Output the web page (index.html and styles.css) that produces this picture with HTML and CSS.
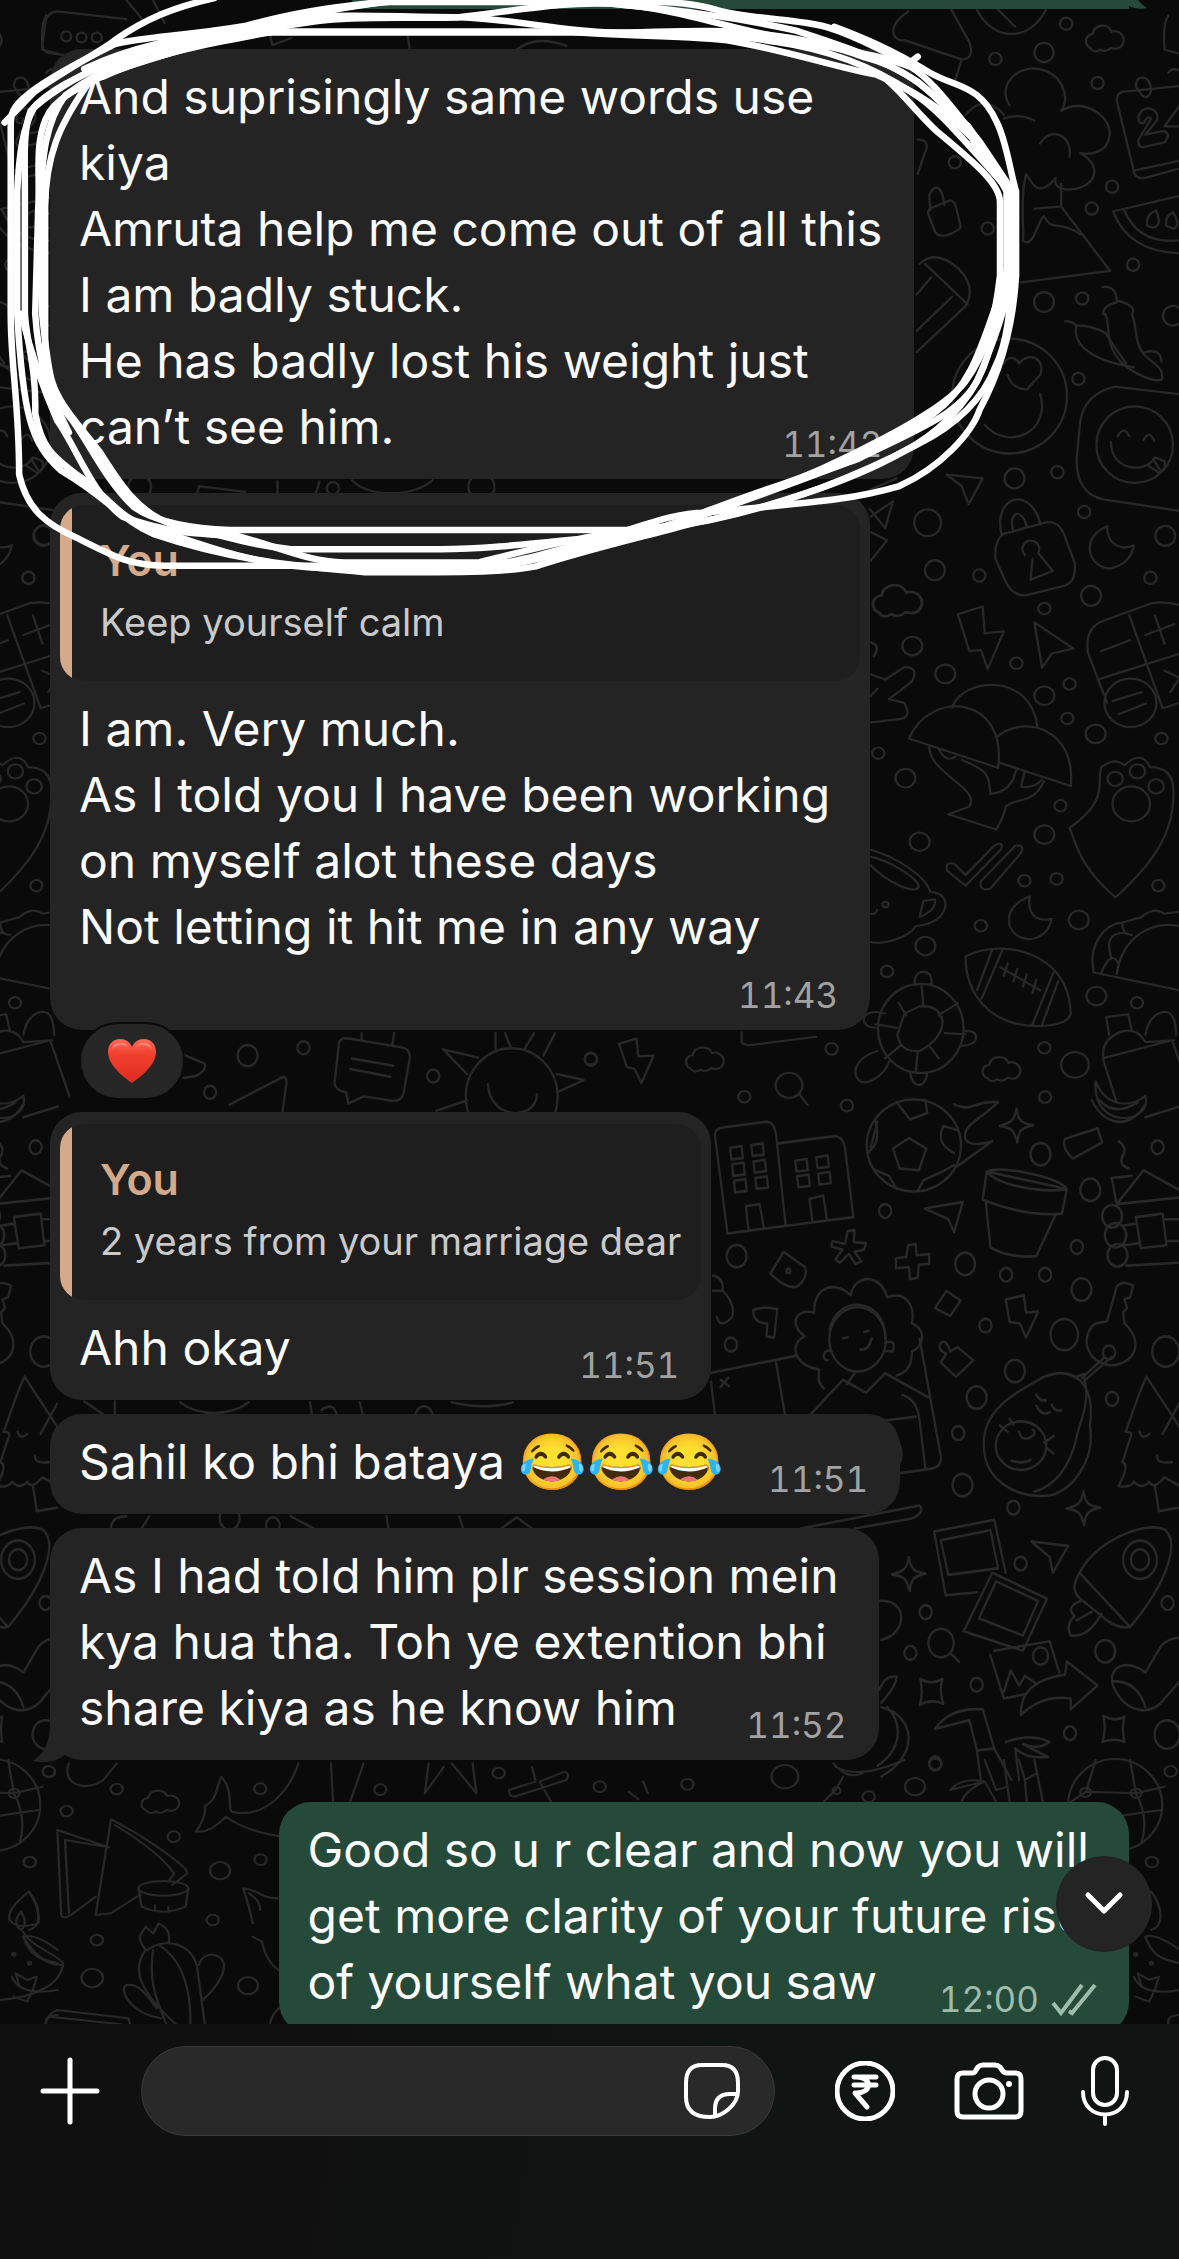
FILE: index.html
```html
<!DOCTYPE html>
<html lang="en">
<head>
<meta charset="utf-8">
<meta name="viewport" content="width=device-width, initial-scale=1">
<title>Chat</title>
<link rel="stylesheet" href="styles.css">
</head>
<body>
<main class="chat">
  <svg class="wallpaper" width="1179" height="2259" viewBox="0 0 1179 2259" aria-hidden="true">
    <defs>
      <path id="cloud" d="M-42 22C-62 12-58-14-38-16C-34-42 2-46 12-22C34-30 50-6 40 12C32 26 20 22 10 20C0 30-12 30-18 24C-28 32-38 30-42 22Z"/>
      <path id="spark" d="M0-38C6-10 12-4 44 0C12 6 6 12 2 40C-6 12-12 6-44 2C-12-6-6-10 0-38Z"/>
      <path id="dart" d="M-48-30L48-20L8 42L0 6Z"/>
      <g id="tile">
        <g transform="scale(.3827)">
          <path d="M860 30C800 70 820 110 850 105L1000 155Q1035 155 1020 110L970 20M1000 155L980 220M1040 25C1080 110 1180 110 1220 25M1080 10L1140 70M1540 40Q1525 60 1530 130L1570 140"/>
          <use href="#cloud" x="1380" y="105"/>
          <path d="M1125 275C1090 220 1150 170 1200 180C1260 190 1285 250 1260 290C1320 250 1400 310 1385 360C1380 400 1330 405 1310 400C1380 440 1340 500 1270 495Q1240 490 1245 465Q1210 510 1185 480M1110 310Q1150 295 1190 315M1205 375C1230 330 1290 350 1282 410M1010 300Q1060 240 1110 300M1185 480L1168 455C1150 530 1165 600 1160 630C1190 650 1200 570 1215 565C1240 610 1245 570 1310 612M1260 480V540L1388 708L1155 738M1190 545L1258 540"/>
          <path d="M1570 225L1420 240Q1400 245 1408 275L1448 440Q1450 470 1480 465L1570 440M1453 445L1570 420M1455 225q0-25 22-22q15 3 18 35q-10 25-25 10ZM1540 190q10-15 30-5"/>
          <path d="M1462 305C1470 270 1520 280 1510 315L1480 352L1528 342Q1548 350 1530 372L1470 385Q1455 375 1465 360L1495 310Q1485 300 1475 322Q1460 325 1462 305ZM1570 275L1530 330L1570 330"/>
          <path d="M918 550L915 510Q935 470 950 510L955 535M915 565Q905 545 930 540L965 525Q980 520 985 540L997 590Q998 603 960 615Q935 618 930 605ZM885 365q30 0 22 25L885 455M905 690L1015 795M882 770L920 725M882 865L975 775M882 920L1010 800Q1040 750 990 700Q930 650 890 690"/>
          <path d="M1396 552L1570 512M1396 552C1420 620 1480 660 1570 662M1425 550C1450 610 1500 635 1570 628M1485 590Q1480 560 1508 550Q1525 590 1500 595ZM1535 590Q1530 565 1552 555Q1575 590 1552 598Z"/>
          <path d="M1368 750C1400 745 1405 770 1405 790C1360 800 1368 830 1375 820C1390 850 1370 900 1420 950C1450 975 1500 1000 1523 992C1530 960 1500 950 1480 930C1450 900 1460 860 1445 820Q1460 800 1405 785M1270 840C1300 838 1300 860 1300 850C1290 890 1320 940 1450 960M1300 850Q1340 850 1375 870L1430 950M1480 920Q1520 910 1522 945"/>
          <circle cx="1125" cy="1035" r="150"/><path d="M1110 950C1120 930 1140 930 1150 950C1170 920 1220 930 1205 980L1170 1018Q1130 1015 1120 980M1205 1030C1235 1130 1120 1180 1060 1110"/>
          <circle cx="1452" cy="1162" r="100"/><path d="M1570 1030L1400 1010Q1320 1030 1310 1100L1300 1200Q1300 1290 1370 1305L1570 1335M1408 1140q15-30 30 0M1475 1150q15-30 28 2M1390 1155C1390 1230 1480 1240 1505 1195L1530 1205Q1535 1230 1515 1235L1485 1215M1500 1200L1520 1230M960 1240L1055 1250L1018 1318L1000 1270Z"/>
          <path d="M1105 1400C1090 1340 1115 1305 1150 1305C1180 1310 1200 1340 1205 1370M1135 1390C1120 1330 1160 1330 1170 1375M1110 1395L1220 1365Q1250 1360 1265 1390L1295 1470Q1300 1520 1270 1530L1170 1555Q1135 1560 1115 1520L1088 1460Q1085 1410 1110 1395ZM1165 1450a22 22 0 1 1 35-5L1238 1492L1180 1515L1185 1460M1380 1375C1300 1410 1340 1490 1390 1485Q1440 1475 1450 1425C1410 1440 1380 1420 1380 1375Z"/>
          <path d="M762 1390L805 1412L762 1465M762 1350L820 1310L800 1380L760 1330M760 1280L830 1250"/>
          <circle cx="1273" cy="62" r="16"/><circle cx="1215" cy="137" r="25"/><circle cx="1088" cy="154" r="16"/><circle cx="1355" cy="217" r="16"/><circle cx="982" cy="424" r="16"/><circle cx="1393" cy="488" r="16"/><circle cx="1340" cy="545" r="16"/><circle cx="1068" cy="597" r="16"/><circle cx="1448" cy="692" r="16"/><circle cx="1215" cy="789" r="26"/><circle cx="1315" cy="780" r="16"/><circle cx="1552" cy="825" r="26"/><circle cx="1305" cy="990" r="16"/><circle cx="1138" cy="1250" r="26"/><circle cx="1250" cy="1234" r="16"/><circle cx="911" cy="1366" r="35"/><circle cx="1320" cy="1338" r="16"/><circle cx="1532" cy="1400" r="26"/><circle cx="930" cy="1490" r="26"/><circle cx="1046" cy="1504" r="16"/><circle cx="1493" cy="1510" r="16"/><circle cx="1338" cy="1557" r="26"/>
        </g>
        <g transform="translate(0 560) scale(.3827 .3571)">
          <use href="#cloud" transform="translate(840 120) scale(1.3)"/>
          <path d="M990 152L1055 130L1060 205L1110 200L1068 305L1050 252L1020 255ZM1190 175L1292 248L1235 262L1210 302ZM1380 400L1330 260Q1320 190 1370 170L1500 120Q1540 115 1580 130M1355 335L1570 262M1438 155L1525 415L1570 400M1365 255L1440 225M1480 210L1555 180M1505 155L1530 235M1530 310L1570 330L1545 370"/>
          <circle cx="1441" cy="400" r="68"/><path d="M1395 395L1470 370M1410 432L1482 402"/>
          <path d="M762 320L800 335L850 300Q890 300 870 340L810 390L850 400Q870 440 840 445L762 455M762 230Q790 240 770 270M762 380L780 360M975 413C1000 330 1180 310 1198 468M862 500C920 360 1120 380 1095 582ZM1090 497C1160 430 1300 470 1285 633L1100 568M915 525C920 600 1050 640 1020 690L965 712L1090 755Q1110 720 1115 690C1150 660 1180 690 1215 620M1000 560C1070 590 1070 600 1075 655Q1130 650 1142 588M940 530Q960 570 985 550M1165 590L1155 635Q1190 640 1210 615"/>
          <path d="M1282 750C1390 670 1350 620 1365 580Q1400 550 1425 575Q1470 530 1492 580Q1550 580 1553 640C1560 760 1500 850 1402 945C1310 860 1300 800 1282 750Z"/><circle cx="1443" cy="683" r="49"/><circle cx="1401" cy="613" r="20"/><circle cx="1459" cy="592" r="20"/><circle cx="1508" cy="634" r="20"/>
          <path d="M1010 912L962 870Q955 845 980 850L1010 882L1085 800Q1110 785 1103 810ZM1050 900L1140 800Q1165 795 1155 820L1075 920Q1045 930 1050 900Z"/>
          <path d="M757 810C830 830 910 890 918 930C980 930 970 1020 880 1025C860 1060 790 1080 757 1068M757 850C800 900 880 940 888 915C885 890 810 840 757 830M900 955L930 950Q935 980 890 1000ZM757 990q20 5 22-10"/><circle cx="801" cy="965" r="8"/>
          <path d="M1178 942C1100 970 1110 1060 1180 1062Q1225 1055 1235 1005C1195 1015 1170 990 1178 942ZM1010 1110C1100 1060 1280 1090 1285 1270Q1280 1300 1210 1305C1070 1310 1010 1210 1010 1110ZM1040 1205L1080 1090M1052 1228L1108 1088M1185 1300L1240 1155M1210 1302L1252 1180M1100 1140L1205 1205M1120 1130L1110 1165M1145 1145L1135 1180M1170 1160L1160 1195M1195 1175L1185 1212"/>
          <path d="M1345 1155C1330 1080 1370 1020 1420 1015L1470 1000Q1500 970 1530 990L1570 985M1345 1155L1570 1205M1405 1160C1420 1050 1500 1010 1570 1025M1420 1020Q1420 1050 1445 1050M1390 1110Q1370 1040 1430 1045M1365 1155Q1390 1090 1410 1130"/>
          <ellipse cx="893" cy="1312" rx="112" ry="125"/><path d="M850 1270L890 1250Q940 1245 950 1290Q950 1340 890 1375Q840 1380 832 1330ZM895 1190L900 1250M835 1240L855 1275M940 1275L990 1240M955 1325L1010 1328M915 1360L940 1395M885 1375L880 1435M840 1360L800 1395M830 1310L775 1300M878 1190C870 1140 930 1140 920 1190M775 1310C730 1310 730 1250 800 1270M1005 1320C1050 1310 1050 1365 995 1360M865 1435C870 1480 905 1485 910 1435M780 1375C730 1390 710 1430 730 1455C750 1480 800 1440 810 1405"/>
          <use href="#cloud" x="1110" y="1430"/><use href="#cloud" x="335" y="1403"/>
          <path d="M1385 1330L1378 1280L1435 1272L1445 1320M1370 1390Q1365 1340 1420 1320Q1460 1310 1480 1350L1555 1345M1370 1395L1550 1345M1370 1400L1405 1520M1480 1330Q1490 1270 1530 1265Q1560 1265 1560 1330M1550 1345L1600 1500M1350 1460C1340 1600 1500 1580 1480 1500C1450 1530 1380 1540 1350 1460ZM425 1323V1350Q430 1360 450 1358L620 1335M105 1355L150 1340L155 1390L195 1388L163 1465L145 1425L125 1420ZM575 1495L597 1525"/><circle cx="549" cy="1471" r="35"/>
          <circle cx="871" cy="241" r="26"/><circle cx="957" cy="319" r="26"/><circle cx="1216" cy="136" r="16"/><circle cx="1143" cy="289" r="16"/><circle cx="1282" cy="347" r="16"/><circle cx="1216" cy="380" r="26"/><circle cx="1276" cy="444" r="16"/><circle cx="1350" cy="487" r="26"/><circle cx="1522" cy="500" r="16"/><circle cx="782" cy="541" r="16"/><circle cx="853" cy="611" r="26"/><circle cx="1258" cy="688" r="16"/><circle cx="1216" cy="769" r="26"/><circle cx="890" cy="789" r="26"/><circle cx="1164" cy="898" r="16"/><circle cx="1248" cy="893" r="16"/><circle cx="1514" cy="912" r="16"/><circle cx="1050" cy="1024" r="16"/><circle cx="1306" cy="1008" r="26"/><circle cx="905" cy="1081" r="26"/><circle cx="805" cy="1152" r="16"/><circle cx="1352" cy="1221" r="26"/><circle cx="1458" cy="1240" r="16"/><circle cx="660" cy="1369" r="16"/><circle cx="1216" cy="1366" r="16"/><circle cx="1296" cy="1414" r="36"/><circle cx="1218" cy="1504" r="16"/><circle cx="432" cy="1503" r="16"/><circle cx="700" cy="1528" r="16"/><circle cx="31" cy="1397" r="16"/>
        </g>
        <g transform="translate(0 1100) scale(.3827 .4337)">
          <path d="M388 308L355 80Q355 65 380 63L490 50Q510 50 515 80L540 290ZM520 100L670 83Q690 85 695 110L717 270L388 308M443 300L436 245L472 240L483 295M610 280L602 228L638 220L648 275M395 110l30-4 3 28-30 3ZM450 104l30-4 3 26-30 3ZM400 148l30-4 3 28-30 3ZM456 142l30-4 3 26-30 3ZM405 186l30-4 3 28-30 3ZM461 180l30-4 3 26-30 3ZM565 140l30-4 3 26-30 3ZM620 132l30-4 3 26-30 3ZM570 176l30-4 3 26-30 3ZM625 170l30-4 3 26-30 3Z"/>
          <ellipse cx="875" cy="105" rx="123" ry="106"/><path d="M862 88L908 112L888 162L838 158L820 112ZM830 5L865 45L910 30L905 0M780 50L762 110M775 50Q790 100 755 120M952 60L990 70M952 60Q930 100 980 122M885 210L900 185L950 165L980 150M770 160L810 175L830 205M980 10C1030 30 1030 0 1095 5C1040 50 1000 60 1010 90Q1020 110 1080 95L985 155"/>
          <use href="#spark" x="1143" y="58"/><path d="M1270 90L1355 65L1367 98L1290 135Q1260 110 1270 90ZM1340 0C1370 60 1440 70 1480 10M1360 0Q1400 40 1460 5M1480 40L1570 15M1410 95Q1435 110 1420 130Q1410 150 1437 158"/>
          <path d="M1065 165L1275 205L1262 262Q1170 270 1055 230ZM1065 165C1110 150 1260 180 1275 205C1220 215 1100 200 1065 165M1063 235L1075 340Q1120 365 1195 360L1245 265M903 250L1003 235L980 305L965 275ZM1392 180L1445 175M1392 180L1405 240L1570 225M1405 240L1475 162L1570 208M1455 270L1525 262L1535 335L1468 342ZM1420 290L1455 285M1425 335L1465 330M1530 275H1570M1535 325H1570M1430 382L1570 375"/><circle cx="1393" cy="268" r="26"/><circle cx="1402" cy="312" r="28"/><circle cx="1407" cy="358" r="26"/>
          <path d="M535 350L590 385Q600 410 570 430Q545 438 500 400ZM662 325L695 332L702 302L720 300L718 328L750 330L745 345L720 350L738 372L722 378L705 355L682 375L670 368L688 345L660 338ZM828 365L855 362L860 335L880 332L882 358L915 355V378L888 380L885 410L865 413L862 385L828 388ZM960 440L997 462L970 498L930 480ZM1115 460L1162 450L1168 490L1200 488L1168 548L1152 515L1125 512Z"/><circle cx="547" cy="394" r="5"/>
          <path d="M1405 430Q1420 415 1448 428L1440 455L1425 460L1432 480L1422 490L1425 515C1480 560 1450 610 1390 612C1320 605 1310 540 1350 515L1380 510ZM1375 592L1315 640M1392 592L1320 648M1295 640L1320 632"/><circle cx="1385" cy="582" r="16"/>
          <path d="M1058 800C1050 700 1180 660 1210 640C1290 610 1350 650 1335 750C1350 830 1290 900 1230 912C1130 920 1060 870 1058 800ZM1320 640C1340 700 1300 760 1300 780C1280 850 1240 890 1190 903M1195 680Q1205 695 1220 692M1195 705Q1210 730 1230 720M1235 702Q1240 718 1260 716M1130 832Q1160 840 1180 830M1100 750L1120 765M1125 735L1135 748M1215 790L1240 775M1222 802L1240 815"/><ellipse cx="1155" cy="797" rx="66" ry="56"/><path d="M1150 765Q1155 785 1175 780Q1200 770 1185 760"/>
          <path d="M455 485Q475 475 518 482L510 548L490 545L492 515Q455 515 455 485ZM350 405Q380 410 375 440Q410 470 400 500Q370 530 360 500M350 440L375 440M340 630L565 590M345 650L355 725M515 605L538 725M370 645L392 660M390 640L370 662M1568 700L1525 770M890 550L945 820Q950 845 920 850L820 863M605 725L690 645L750 675L800 630L912 685M845 680Q885 690 890 740L905 850M790 740L880 730M820 770Q860 810 830 850M700 655L720 630"/>
          <circle cx="728" cy="552" r="74"/><path d="M655 530C670 450 800 450 800 550M650 600C630 600 640 570 660 580M800 560Q830 550 820 580L800 578M640 665C610 640 640 620 620 620C560 610 550 560 590 545C550 520 560 480 615 490C610 440 660 410 710 450C720 400 790 400 805 455C850 440 880 470 870 515C910 530 900 570 870 580C870 620 850 630 830 635M690 550l12-3M745 535l12-3M735 575Q755 580 765 550"/>
          <path d="M945 560Q960 550 970 580L990 570L1030 600L985 638L945 605L960 585Q935 575 945 560ZM1483 638L1570 755M1483 638C1460 680 1440 740 1428 765Q1450 765 1440 780L1420 835Q1440 840 1410 890Q1440 895 1450 880Q1470 900 1490 880Q1500 900 1530 870L1570 890M1505 890L1515 948L1568 940M1465 765Q1470 785 1490 770M1510 820Q1510 840 1550 835"/>
          <use href="#spark" x="1318" y="940"/><use href="#spark" x="862" y="1092"/><use href="#dart" transform="translate(1230 1048)"/>
          <path d="M928 995L1085 968L1115 1090M928 995L958 1142L1040 1135M945 1015L1075 992L1095 1080L965 1095ZM1080 1090L1223 1150L1160 1270L1005 1225ZM1090 1110L1200 1155L1160 1235L1045 1195ZM1085 1270L1230 1248L1255 1320M1075 1280L1110 1380L1165 1370M1110 1365L1128 1315L1150 1350L1165 1328L1195 1345"/><circle cx="1206" cy="1282" r="20"/>
          <path d="M1155 1418Q1150 1340 1270 1325L1275 1295L1355 1350L1285 1405V1380Q1210 1370 1155 1418ZM1308 1090C1350 1020 1470 970 1530 990C1570 1020 1540 1110 1440 1215ZM1308 1090Q1280 1130 1310 1150L1380 1200Q1410 1220 1440 1215M1310 1155Q1270 1170 1295 1190Q1270 1210 1285 1235Q1330 1240 1365 1185M1300 1200L1340 1180"/><circle cx="1466" cy="1060" r="44"/><circle cx="1466" cy="1060" r="24"/>
          <path d="M785 1155C860 1150 860 1230 790 1245M790 1390Q830 1350 830 1330Q800 1325 785 1360M790 1400C880 1420 890 1510 790 1560M805 1400C850 1440 840 1500 780 1535M580 988L890 935Q905 950 870 965L720 988M970 1275L993 1295M892 1335Q920 1350 950 1335Q940 1360 952 1392Q920 1380 890 1395Q900 1370 892 1335M1370 1420Q1400 1435 1425 1422Q1418 1450 1425 1480Q1400 1470 1368 1480Q1378 1450 1370 1420"/><circle cx="946" cy="1252" r="33"/>
          <path d="M1480 1320C1440 1290 1380 1300 1395 1350C1430 1420 1500 1420 1530 1380L1580 1330M1480 1320L1520 1260Q1540 1240 1570 1240M1395 1340Q1460 1340 1480 1400M930 1450Q970 1400 1055 1405L1085 1495L1040 1500L1020 1430ZM930 1450L1020 1430M1040 1500L1050 1568M1085 1495L1130 1568M1115 1480Q1180 1460 1230 1480Q1200 1500 1160 1485L1225 1515Q1170 1520 1140 1495L1150 1568"/>
          <circle cx="412" cy="360" r="26"/><circle cx="397" cy="564" r="16"/><circle cx="800" cy="256" r="16"/><circle cx="1206" cy="125" r="26"/><circle cx="1512" cy="109" r="16"/><circle cx="1336" cy="207" r="26"/><circle cx="1009" cy="378" r="26"/><circle cx="1301" cy="339" r="16"/><circle cx="1116" cy="403" r="16"/><circle cx="1218" cy="403" r="16"/><circle cx="1313" cy="437" r="26"/><circle cx="1062" cy="520" r="16"/><circle cx="1268" cy="541" r="36"/><circle cx="1533" cy="580" r="35"/><circle cx="1139" cy="625" r="26"/><circle cx="1039" cy="686" r="26"/><circle cx="1393" cy="689" r="16"/><circle cx="991" cy="768" r="16"/><circle cx="1002" cy="888" r="26"/><circle cx="1135" cy="940" r="16"/><circle cx="1154" cy="1069" r="16"/><circle cx="906" cy="1181" r="16"/><circle cx="866" cy="1275" r="16"/><circle cx="1375" cy="1271" r="26"/><circle cx="1039" cy="1348" r="16"/><circle cx="1538" cy="1160" r="16"/><circle cx="1283" cy="1460" r="16"/><circle cx="1537" cy="1463" r="33"/><circle cx="931" cy="1530" r="16"/>
        </g>
        <g transform="translate(0 1760) scale(.3827 .3333)">
          <ellipse cx="1401" cy="135" rx="123" ry="138"/><path d="M1325 95L1455 100L1530 80M1325 95L1280 130M1325 95L1350 0M1455 100L1440 0M1455 100Q1490 170 1470 250M1340 180L1520 150M970 90Q1000 50 1060 65M970 90Q1020 75 1060 65Q1010 90 1000 125M1060 65L1090 125M1060 0L1090 90L1120 80M1110 0L1125 125M1150 0L1165 60L1195 40M1165 60L1170 125M1190 0L1212 125M665 10Q700 60 740 40M670 20Q730 60 850 0M690 50L670 90L640 125M130 95L155 118M168 65L180 100"/>
          <path d="M1495 395C1530 450 1525 500 1495 510M1480 530C1500 600 1540 600 1570 610M1480 530Q1510 520 1570 570M1450 650Q1470 710 1570 690M1455 710L1490 725L1500 700M1470 680L1460 640L1490 660L1515 650L1505 690M1540 793Q1535 765 1570 765"/>
          <circle cx="54" cy="80" r="16"/><circle cx="283" cy="73" r="16"/><circle cx="538" cy="50" r="35"/><circle cx="878" cy="80" r="26"/><circle cx="757" cy="110" r="16"/><circle cx="673" cy="92" r="10"/><circle cx="931" cy="12" r="16"/><circle cx="1497" cy="306" r="16"/><circle cx="1546" cy="34" r="16"/><circle cx="1455" cy="583" r="4"/><circle cx="1496" cy="610" r="4"/><circle cx="1324" cy="97" r="14"/><circle cx="1456" cy="100" r="14"/>
        </g>
      </g>
    </defs>
    <use href="#tile" x="579"/>
    <use href="#tile" x="-543"/>
    <g transform="scale(.3827)">
      <path d="M120 50Q130 30 150 30L330 50M120 50L110 120Q115 140 140 140L220 150M330 0L380 60M400 0L430 60M700 70L712 118L760 100M1065 90L1070 125M1350 130Q1400 90 1480 120M520 1270L515 1290M520 1270L640 1285M725 1258V1290M835 1258L825 1290M920 1255C960 1300 1080 1300 1130 1255"/>
      <circle cx="173" cy="95" r="13"/><circle cx="213" cy="98" r="13"/><circle cx="253" cy="98" r="13"/><circle cx="870" cy="1276" r="16"/><circle cx="365" cy="1272" r="30"/><circle cx="1258" cy="1272" r="34"/><circle cx="74" cy="1510" r="16"/><circle cx="115" cy="1398" r="26"/>
    </g>
    <g transform="translate(0 480) scale(.3827 .4082)">
      <path d="M885 1385Q885 1365 910 1368L1050 1390Q1075 1395 1070 1420L1055 1500Q1050 1525 1020 1520L950 1510L910 1528L905 1500Q870 1495 875 1470ZM920 1417L1028 1435M915 1443L1020 1462M945 1355V1370M1030 1355L1025 1385M600 1530L740 1462Q750 1462 748 1480L735 1568M480 1408L535 1430Q540 1450 510 1460L480 1465M1158 1395L1250 1415M1158 1395L1220 1455M1295 1355V1395M1320 1355L1335 1392M1370 1395L1395 1355M1420 1410L1450 1355M1455 1455L1525 1470L1455 1500M1220 1520L1140 1545M1275 1480C1280 1570 1400 1570 1403 1505"/><ellipse cx="1337" cy="1510" rx="120" ry="118"/>
      <circle cx="647" cy="1410" r="26"/><circle cx="793" cy="1391" r="16"/><circle cx="1132" cy="1460" r="16"/><circle cx="549" cy="1500" r="16"/><circle cx="1544" cy="1419" r="16"/>
    </g>
    <g transform="translate(0 1100) scale(.3827 .4337)">
      <path d="M220 695L270 725M300 695V725M470 697C520 730 600 730 650 697M810 697L815 725M840 715Q870 695 880 725M940 697L948 725M1180 697Q1270 715 1340 697M290 988Q290 960 330 960M390 960L370 988M760 960L820 988M1010 960L1015 988M1200 960L1210 988M1310 988L1350 962L1390 988"/><circle cx="600" cy="965" r="26"/><circle cx="713" cy="980" r="18"/><circle cx="1108" cy="728" r="22"/>
    </g>
    <g transform="translate(0 1760) scale(.3827 .3333)">
      <path d="M150 210L160 465Q165 480 185 465L250 410M150 210L285 262M170 240L285 262M170 240L180 460M290 178L250 465L290 460L365 405M290 178C380 230 490 320 490 340L450 375M300 195C380 250 430 300 455 340L440 365"/>
      <ellipse cx="427" cy="385" rx="65" ry="22"/><path d="M362 385L370 440Q425 470 485 440L492 385M405 435V450M440 440V455M578 50C560 100 570 110 535 140Q540 170 512 215Q550 220 590 170C640 210 690 220 735 230M578 50C610 90 595 140 605 155C700 180 760 80 780 10M180 10C160 70 220 100 270 60L305 10M865 10L870 125M950 10L915 125M1120 10L1110 100L1160 20M1180 10L1245 100L1235 10M1390 20L1400 65L1330 90Q1330 115 1350 108L1480 60Q1490 40 1475 35L1410 65L1440 125"/>
      <path d="M635 385C680 390 680 415 725 415M635 385Q650 430 660 490M650 400Q680 420 680 450M660 530L685 545Q695 610 735 635M380 570C350 620 350 680 460 793M365 530L380 500L400 520L415 490Q450 510 440 550M365 530Q370 565 385 570M385 570C430 530 500 550 515 620L535 793M400 570C390 650 400 700 435 793M415 555C480 600 500 700 497 793M520 615C530 570 580 580 585 610C590 650 550 700 530 720M420 775C340 760 310 690 330 675C370 670 390 720 410 745M118 793Q125 760 150 750L335 775L340 793M130 770L315 793M705 793Q710 760 735 740M75 395C40 430 20 450 25 480Q45 510 100 490Q105 440 75 395ZM55 455Q30 490 55 510Q75 490 55 455M60 515C80 560 160 590 165 610C160 670 100 710 0 720M60 530Q110 620 165 615"/>
      <use href="#cloud" x="425" y="130"/><circle cx="128" cy="35" r="16"/><circle cx="305" cy="87" r="16"/><circle cx="174" cy="153" r="16"/><circle cx="454" cy="230" r="16"/><circle cx="680" cy="86" r="16"/><circle cx="78" cy="306" r="16"/><circle cx="575" cy="332" r="26"/><circle cx="681" cy="299" r="16"/><circle cx="556" cy="480" r="16"/><circle cx="253" cy="540" r="16"/><circle cx="241" cy="654" r="28"/><circle cx="648" cy="677" r="26"/><circle cx="994" cy="89" r="16"/><circle cx="1303" cy="39" r="16"/>
    </g>
  </svg>

  <div class="message sent sent-earlier">
    <svg class="tail tail-right" viewBox="0 0 40 24" aria-hidden="true"><path d="M0 24C10 24 14 22 18 19C24 23 34 25 40 23C32 18 27 12 27 0H0Z"/></svg>
  </div>

  <article class="message lone">
    <div class="body">
      <p>And suprisingly same words use
kiya
Amruta help me come out of all this
I am badly stuck.
He has badly lost his weight just
can’t see him.</p>
      <time>11:42</time>
    </div>
  </article>

  <article class="message reacted">
    <blockquote class="quote"><strong>You</strong><span>Keep yourself calm</span></blockquote>
    <div class="body roomy">
      <p>I am. Very much.
As I told you I have been working
on myself alot these days
Not letting it hit me in any way</p>
      <time>11:43</time>
    </div>
    <button class="reaction" type="button" aria-label="Heart reaction">
      <svg viewBox="0 0 50 46" aria-hidden="true">
        <defs><linearGradient id="red" x1="0" y1="0" x2="0" y2="1"><stop offset="0" stop-color="#ff6a58"/><stop offset=".35" stop-color="#f2402f"/><stop offset="1" stop-color="#dc2b20"/></linearGradient></defs>
        <path fill="url(#red)" d="M25 45C21 42 1 29 1 14C1 5 7 1 13 1C19 1 23 4 25 9C27 4 31 1 37 1C43 1 49 5 49 14C49 29 29 42 25 45Z"/>
        <path fill="#ff9d8c" opacity=".6" d="M5 11C6 4 18 2 21 9C16 6 9 7 5 11ZM29 9C32 2 44 4 45 11C41 7 34 6 29 9Z"/>
      </svg>
    </button>
  </article>

  <article class="message">
    <blockquote class="quote"><strong>You</strong><span>2 years from your marriage dear</span></blockquote>
    <div class="body"><p>Ahh okay</p><time>11:51</time></div>
  </article>

  <article class="message">
    <div class="body inline"><p>Sahil ko bhi bataya <span class="emoji">😂😂😂</span></p><time>11:51</time></div>
  </article>

  <article class="message last">
    <div class="body">
      <p>As I had told him plr session mein
kya hua tha. Toh ye extention bhi
share kiya as he know him</p>
      <time>11:52</time>
    </div>
    <svg class="tail tail-left" viewBox="0 0 40 40" aria-hidden="true"><path d="M17 0C17 18 12 30 0 38C12 41 24 38 30 33L40 20Z"/></svg>
  </article>

  <article class="message sent">
    <div class="body">
      <p>Good so u r clear and now you will
get more clarity of your future rise
of yourself what you saw</p>
      <time>12:00 <svg class="ticks" viewBox="0 0 46 34" aria-label="Delivered"><path d="M2 21L10 31L31 3M18 29L21 31L44 3"/></svg></time>
    </div>
  </article>

  <button class="jump" type="button" aria-label="Scroll to latest">
    <svg viewBox="0 0 40 26" aria-hidden="true"><path d="M4 4L20 20L36 4"/></svg>
  </button>

  <svg class="scribble" width="1179" height="620" viewBox="0 0 1179 620" aria-hidden="true">
    <g transform="scale(.3827)">
      <path d="M12 320L90 240C150 195 270 130 300 105C380 50 450 20 560 -5"/>
      <path d="M2398 148L2370 170C2310 130 2200 80 2150 68C2050 45 1950 50 1870 25C1780 0 1700 5 1600 5H1000C850 20 760 35 640 68C480 95 380 95 300 115C200 165 120 210 75 245C30 280 28 300 28 330V820C28 960 50 1050 50 1240C70 1330 120 1370 200 1405C300 1455 340 1478 430 1478H1200C1350 1478 1420 1445 1540 1415C1680 1375 1760 1340 1840 1340C2150 1310 2230 1305 2350 1270C2460 1220 2540 1130 2560 1070C2620 960 2648 840 2655 720V500C2640 450 2630 370 2605 320C2560 220 2500 230 2430 190C2330 130 2260 100 2180 70"/>
      <path d="M1200 45C1400 20 1480 5 1600 10C1750 20 1860 60 2000 90C2130 120 2300 140 2380 175C2440 210 2500 300 2560 370L2640 490V650C2620 780 2600 880 2570 960C2530 1060 2440 1140 2360 1180C2220 1260 2000 1330 1800 1370C1650 1410 1520 1440 1400 1480C1300 1500 1100 1495 950 1495C800 1480 620 1470 400 1395C320 1360 280 1300 160 1230C80 1160 60 1080 45 820V500C50 400 60 330 90 280C160 220 240 180 320 145C470 90 600 85 800 45C900 35 1050 45 1200 45C1350 50 1450 80 1600 85C1750 90 1900 85 2030 110C2170 130 2290 180 2380 240C2450 280 2520 370 2640 500"/>
      <path d="M1200 45C1100 50 950 40 830 55C650 80 450 120 300 160C200 200 120 240 80 290C60 340 65 420 65 500V820C70 900 95 960 92 1080C110 1180 150 1200 200 1240C280 1290 310 1360 400 1380C540 1430 680 1480 850 1485H1200C1400 1480 1450 1440 1600 1415C1750 1380 1850 1330 2000 1280C2150 1230 2330 1160 2440 1080C2550 1000 2570 880 2630 720V500C2580 400 2490 290 2400 215C2300 150 2200 120 2080 80C1900 40 1750 25 1600 10"/>
      <path d="M55 820C80 920 110 1010 150 1100C200 1170 240 1290 320 1350C430 1390 500 1395 620 1400C760 1440 800 1465 900 1470H1250C1450 1420 1520 1400 1740 1375C1900 1330 2100 1250 2240 1200C2400 1120 2520 1080 2560 980C2610 860 2655 740 2645 600C2650 480 2590 420 2530 330C2440 250 2380 180 2260 150C2150 110 2080 100 2000 90C1830 70 1700 90 1513 85H700C560 100 420 145 300 185C200 230 140 260 120 310C90 380 105 460 100 540L92 820C100 950 130 1030 180 1130"/>
      <path d="M2300 195C2350 230 2390 290 2450 345C2540 420 2615 480 2613 530V720C2600 830 2580 920 2520 1000C2480 1050 2380 1110 2300 1150C2150 1230 2000 1290 1850 1340C1800 1360 1720 1385 1680 1385H600C480 1380 400 1360 350 1325C280 1260 240 1170 190 1100C130 1030 125 960 110 820L105 540C110 400 120 320 170 250C300 150 440 120 560 95C750 50 850 25 1000 5"/>
      <path d="M240 205C150 330 120 410 118 540V940C140 1050 200 1100 260 1180C310 1260 360 1340 450 1370C560 1390 620 1420 760 1435H1150C1250 1435 1350 1425 1500 1410C1650 1420 1700 1380 1850 1360C2050 1320 2250 1240 2400 1160C2500 1110 2570 1040 2600 960C2640 880 2640 780 2650 640V520C2620 470 2580 450 2540 360C2480 300 2400 240 2290 195C2200 180 2050 130 1900 105C1750 90 1600 95 1480 82H720C560 110 400 140 270 200"/>
      <path d="M220 180C350 120 500 90 640 78C780 40 900 10 1080 0"/>
    </g>
  </svg>
</main>

<footer class="composer">
  <button type="button" class="icon add" aria-label="Add"><svg viewBox="0 0 60 68" aria-hidden="true"><path d="M30 3V65M3 34H57"/></svg></button>
  <div class="field">
    <input type="text" aria-label="Message">
    <button type="button" class="icon sticker" aria-label="Stickers"><svg viewBox="0 0 56 56" aria-hidden="true"><path d="M18 2H38Q54 2 54 20V28C54 42 38 54 26 54Q2 54 2 34V20Q2 2 18 2ZM53 31H46Q31 31 31 46V53"/></svg></button>
  </div>
  <button type="button" class="icon pay" aria-label="Pay"><svg viewBox="0 0 60 60" aria-hidden="true"><circle cx="30" cy="30" r="28"/><path d="M19 16H41M19 24H41M20 16C38 15 38 33 20 32L32 46"/></svg></button>
  <button type="button" class="icon camera" aria-label="Camera"><svg viewBox="0 0 70 58" aria-hidden="true"><path d="M9 11H18Q21 11 22 8L24 5Q26 3 29 3H41Q44 3 46 5L48 8Q50 11 53 11H61Q67 11 67 17V49Q67 55 61 55H9Q3 55 3 49V17Q3 11 9 11Z"/><circle cx="35" cy="32" r="14"/><circle class="solid" cx="55" cy="22" r="3"/></svg></button>
  <button type="button" class="icon mic" aria-label="Record voice message"><svg viewBox="0 0 48 70" aria-hidden="true"><rect x="12" y="2" width="24" height="47" rx="12"/><path d="M2 36C2 66 46 66 46 36M24 60V68"/></svg></button>
</footer>
</body>
</html>
```
FILE: styles.css
```css
* { box-sizing: border-box; }

body {
  margin: 0;
  height: 100vh;
  display: flex;
  flex-direction: column;
  background: #0a0a0a;
  color: #fafafa;
  font-family: Inter, "Liberation Sans", sans-serif;
  font-size: 48px;
  line-height: 66px;
}

button {
  border: 0;
  padding: 0;
  background: none;
  color: inherit;
}

svg { display: block; }
p, blockquote { margin: 0; }

.chat {
  position: relative;
  flex: 1 1 0;
  min-height: 0;
  overflow: hidden;
  display: flex;
  flex-direction: column;
  align-items: flex-start;
  gap: 14px;
  padding: 0 50px;
}

.chat > * { flex-shrink: 0; }

.wallpaper {
  position: absolute;
  top: 0;
  left: 0;
  fill: none;
  stroke: #282828;
  stroke-width: 6;
  stroke-linejoin: round;
  stroke-linecap: round;
}

.message {
  position: relative;
  max-width: 100%;
  border-radius: 32px;
  background: #242424;
}

.lone { margin-top: 26px; }
.reacted { margin-bottom: 68px; }

.sent {
  align-self: flex-end;
  margin-top: 28px;
  background: #264a3a;
}

.sent-earlier {
  width: 72%;
  height: 9px;
  margin-top: 0;
  border-radius: 0 0 0 9px;
}

.body {
  display: grid;
  padding: 15px 32px 19px 29px;
}

.body p {
  grid-area: 1 / 1;
  white-space: pre-line;
}

.body time {
  grid-area: 1 / 1;
  place-self: end;
  display: flex;
  gap: 12px;
  align-items: center;
  font-size: 35px;
  font-variant-numeric: tabular-nums;
  line-height: 40px;
  color: #a2a2a2;
  margin-bottom: -4px;
}

.roomy p { padding-bottom: 51px; }

.roomy p,
.last p,
.sent p { padding-right: 8px; }

.inline {
  grid-template-columns: auto auto;
  column-gap: 44px;
}

.inline time { grid-area: 1 / 2; }

.sent time { color: #9dbcab; }

.emoji {
  font-family: "Noto Color Emoji", sans-serif;
  font-size: 55px;
  line-height: 1;
  vertical-align: -2px;
}

.inline p { height: 66px; }

.ticks {
  width: 46px;
  height: 34px;
  fill: none;
  stroke: currentColor;
  stroke-width: 4;
}

.message:has(.quote) { padding-top: 12px; }

.quote {
  display: flex;
  flex-direction: column;
  gap: 8px;
  margin: 0 10px;
  padding: 29px 20px 31px 40px;
  border-radius: 24px;
  background: linear-gradient(90deg, #d4aa8a 12px, #1e1e1e 12px);
}

.quote strong {
  color: #d4aa8a;
  font-size: 43px;
  font-weight: 600;
  line-height: 52px;
}

.quote span {
  color: #cacaca;
  font-size: 38px;
  line-height: 56px;
}

.reaction {
  position: absolute;
  left: 29px;
  top: calc(100% - 8px);
  display: grid;
  place-items: center;
  width: 106px;
  height: 78px;
  border: 2px solid #0a0a0a;
  border-radius: 39px;
  background: #262626;
}

.reaction svg { width: 50px; height: 46px; }

.tail { position: absolute; fill: #242424; }
.tail-left { left: -17px; bottom: -3px; width: 40px; height: 40px; }
.tail-right { right: -18px; bottom: 0; width: 40px; height: 24px; fill: #264a3a; }

.jump {
  position: absolute;
  right: 27px;
  bottom: 72px;
  display: grid;
  place-items: center;
  width: 96px;
  height: 96px;
  border-radius: 50%;
  background: #242424;
}

.jump svg {
  width: 40px;
  height: 26px;
  fill: none;
  stroke: #fff;
  stroke-width: 5;
  stroke-linecap: round;
  stroke-linejoin: round;
}

.scribble {
  position: absolute;
  top: 0;
  left: 0;
  fill: none;
  stroke: #fff;
  stroke-width: 17;
  stroke-linecap: round;
  pointer-events: none;
}

.composer {
  display: flex;
  align-items: center;
  padding: 22px 50px 123px 40px;
  background: linear-gradient(100deg, #101010 25%, #101413 60%);
}

.icon svg {
  fill: none;
  stroke: #fff;
  stroke-width: 5;
  stroke-linecap: round;
  stroke-linejoin: round;
}

.icon .solid { fill: #fff; stroke: none; }
.add svg { width: 60px; height: 68px; }
.pay svg { width: 60px; height: 60px; }
.sticker svg { width: 56px; height: 56px; stroke-width: 4; }
.camera svg { width: 72px; height: 58px; }
.mic svg { width: 48px; height: 70px; stroke-width: 4; }

.field {
  display: flex;
  flex: 1;
  min-width: 0;
  align-items: center;
  height: 90px;
  margin: 0 60px 0 41px;
  padding: 0 34px 0 40px;
  border: 1px solid #3a3a3a;
  border-radius: 45px;
  background: #292929;
}

.field input {
  flex: 1;
  width: 0;
  min-width: 0;
  border: 0;
  outline: 0;
  background: none;
  color: inherit;
  font: inherit;
}

.camera { margin: 0 56px 0 58px; }
```
